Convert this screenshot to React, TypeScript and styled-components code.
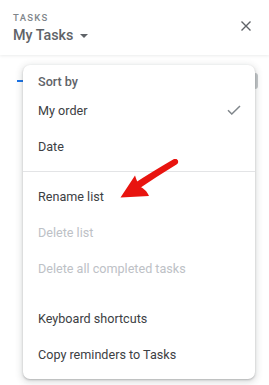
import styled, { createGlobalStyle } from "styled-components";

const GlobalStyle = createGlobalStyle`
  html, body {
    margin: 0;
    padding: 0;
    background: #ffffff;
    font-family: Roboto, "Liberation Sans", Arial, sans-serif;
  }
`;

const Page = styled.div`
  position: relative;
  width: 269px;
  height: 385px;
  overflow: hidden;
  background: #ffffff;
`;

const Header = styled.header`
  height: 55px;
  box-sizing: border-box;
  padding: 11px 18px 0 13px;
  display: flex;
  justify-content: space-between;
  align-items: flex-start;
  box-shadow: 0 1px 3px rgba(60, 64, 67, 0.1);
`;

const TitleBlock = styled.div`
  display: flex;
  flex-direction: column;
`;

const Eyebrow = styled.div`
  font-size: 9.5px;
  line-height: 13px;
  letter-spacing: 1.3px;
  font-weight: 500;
  color: #80868b;
`;

const ListPicker = styled.div`
  display: flex;
  align-items: center;
  gap: 7px;
  margin-top: 1px;
  font-size: 14.3px;
  line-height: 20px;
  font-weight: 500;
  color: #5f6368;
`;

const Caret = styled.span`
  width: 0;
  height: 0;
  margin-top: 1px;
  border-left: 4px solid transparent;
  border-right: 4px solid transparent;
  border-top: 4px solid #5f6368;
`;

const CloseButton = styled.button`
  margin-top: 10px;
  padding: 0;
  border: 0;
  background: none;
  width: 10px;
  height: 10px;
  display: flex;
`;

const Behind = styled.div`
  display: flex;
  justify-content: space-between;
  align-items: center;
  padding: 18px 11px 0 0;
  height: 16px;
`;

const AddIcon = styled.span`
  width: 8px;
  height: 2px;
  margin-left: 17px;
  background: #1a73e8;
`;

const Thumb = styled.span`
  width: 6px;
  height: 16px;
  border-radius: 3px;
  background: #c4c7c9;
`;

const Menu = styled.div`
  position: absolute;
  top: 65px;
  left: 23px;
  width: 232px;
  box-sizing: border-box;
  padding: 6px 0 7px;
  background: #ffffff;
  border-radius: 7px;
  box-shadow: 0 1px 2px 0 rgba(60, 64, 67, 0.3),
    0 2px 6px 2px rgba(60, 64, 67, 0.15);
`;

const SectionLabel = styled.div`
  height: 21px;
  padding: 0 15px;
  display: flex;
  align-items: center;
  font-size: 12.6px;
  font-weight: 500;
  color: #5f6368;
`;

const Item = styled.div<{ $disabled?: boolean }>`
  height: 36px;
  padding: 0 14px 0 15px;
  display: flex;
  align-items: center;
  justify-content: space-between;
  font-size: 12.6px;
  color: ${(p) => (p.$disabled ? "#bdc1c6" : "#3c4043")};
`;

const Divider = styled.div`
  height: 1px;
  margin: 7px 0 6px;
  background: #e3e4e6;
`;

const Spacer = styled.div`
  height: 14px;
`;

const Annotation = styled.svg`
  position: absolute;
  left: 0;
  top: 0;
  pointer-events: none;
`;

const Check = () => (
  <svg width="14" height="10" viewBox="0 0 14 10" fill="none">
    <path d="M1 5.2 L4.8 9 L13 1" stroke="#80868b" strokeWidth="1.5" />
  </svg>
);

const CloseIcon = () => (
  <svg width="10" height="10" viewBox="0 0 10 10">
    <path d="M0.5 0.5 L9.5 9.5 M9.5 0.5 L0.5 9.5" stroke="#5f6368" strokeWidth="1.4" />
  </svg>
);

export default function App() {
  return (
    <>
      <GlobalStyle />
      <Page>
        <Header>
          <TitleBlock>
            <Eyebrow>TASKS</Eyebrow>
            <ListPicker>
              My Tasks
              <Caret />
            </ListPicker>
          </TitleBlock>
          <CloseButton aria-label="Close">
            <CloseIcon />
          </CloseButton>
        </Header>

        <Behind>
          <AddIcon />
          <Thumb />
        </Behind>

        <Menu>
          <SectionLabel>Sort by</SectionLabel>
          <Item>
            My order
            <Check />
          </Item>
          <Item>Date</Item>
          <Divider />
          <Item>Rename list</Item>
          <Item $disabled>Delete list</Item>
          <Item $disabled>Delete all completed tasks</Item>
          <Spacer />
          <Item>Keyboard shortcuts</Item>
          <Item>Copy reminders to Tasks</Item>
        </Menu>

        <Annotation width="269" height="385" viewBox="0 0 269 385">
          <path
            d="M176.5 159 C179 160.5 178.5 163.5 176.5 164.5 C163 173 150 181 137 190 L132.5 184.5 C146.5 175.5 160.5 166.5 174 159 Z"
            fill="#e8140f"
          />
          <path
            d="M120.5 197.5 L135 175.5 C136.5 180.5 138.5 184.5 140.5 187 C143.5 188.5 147 191 149 196 Z"
            fill="#e8140f"
          />
        </Annotation>
      </Page>
    </>
  );
}
